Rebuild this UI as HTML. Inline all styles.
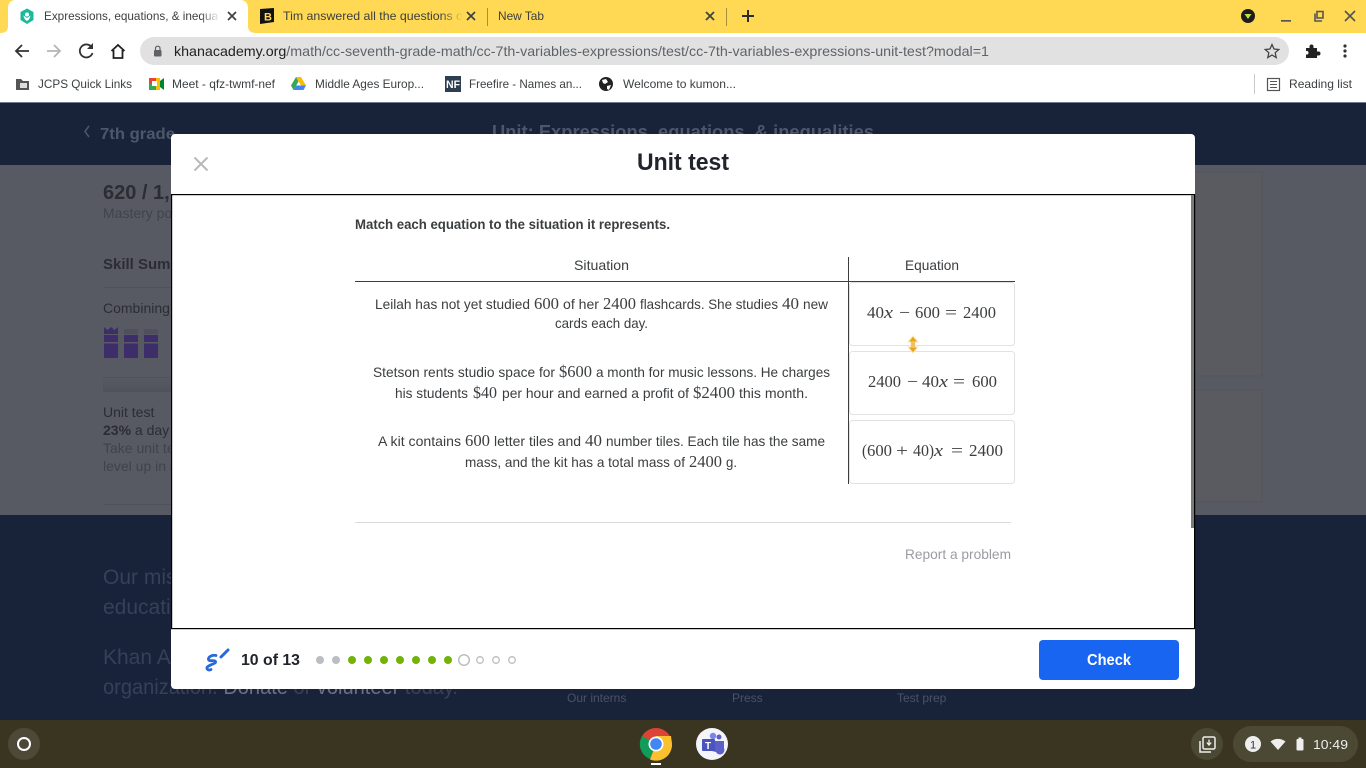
<!DOCTYPE html>
<html><head><meta charset="utf-8"><title>Unit test</title>
<style>
html,body{margin:0;padding:0;width:1366px;height:768px;overflow:hidden;background:#fff}
svg{display:block}
text{font-family:"Liberation Sans",sans-serif;white-space:pre}
.b{font-size:12px;fill:#3c4043}
.s{font-size:14px;fill:#3b3e40}
.m{font-family:"Liberation Serif",serif;font-size:17px;fill:#3b3e40}
.e{font-family:"Liberation Serif",serif;font-size:17px;fill:#3b3e40}
.t{font-size:12px;fill:#3c4043}
</style></head><body>
<svg width="1366" height="768" viewBox="0 0 1366 768" xmlns="http://www.w3.org/2000/svg">
<defs>
<linearGradient id="f1" x1="0" x2="1"><stop offset="0" stop-color="#fff" stop-opacity="0"/><stop offset="1" stop-color="#fff"/></linearGradient>
<linearGradient id="f2" x1="0" x2="1"><stop offset="0" stop-color="#ffd954" stop-opacity="0"/><stop offset="1" stop-color="#ffd954"/></linearGradient>
<linearGradient id="g1" x1="0" x2="0" y1="0" y2="1"><stop offset="0" stop-color="#585a63"/><stop offset="1" stop-color="#50525a"/></linearGradient>
</defs>

<!-- tab strip -->
<rect width="1366" height="33" fill="#ffd954"/>
<path d="M0 33 C6 33 8 30 8 26 V8 C8 3 11 0 16 0 H240 C245 0 248 3 248 8 V26 C248 30 250 33 256 33 Z" fill="#fff"/>
<path d="M27 8.500 L33.500 12 V20 L27 24 L20.500 20 V12 Z" fill="#1cb89a"/>
<circle cx="27" cy="14.500" r="2" fill="#fff"/><path d="M23.500 15.500 C24 19 26 20.500 27 21 C28 20.500 30 19 30.500 15.500 L27 18 Z" fill="#fff"/>
<text x="44" y="20" class="t" textLength="174" lengthAdjust="spacingAndGlyphs">Expressions, equations, &amp; inequa</text>
<rect x="200" y="6" width="20" height="20" fill="url(#f1)"/>
<path d="M228 12 L236 20 M236 12 L228 20" stroke="#3c4043" stroke-width="1.700"/>
<path d="M260 9 L274 8 V22 L260 24 Z" fill="#111"/><text x="264" y="20.500" font-size="11" font-weight="700" fill="#ffd954">B</text>
<text x="283" y="20" class="t" textLength="180" lengthAdjust="spacingAndGlyphs">Tim answered all the questions o</text>
<rect x="441" y="6" width="22" height="20" fill="url(#f2)"/>
<path d="M467 12 L475 20 M475 12 L467 20" stroke="#3c4043" stroke-width="1.700"/>
<rect x="487" y="8" width="1" height="18" fill="#a89038"/>
<text x="498" y="20" class="t" textLength="46" lengthAdjust="spacingAndGlyphs">New Tab</text>
<path d="M706 12 L714 20 M714 12 L706 20" stroke="#3c4043" stroke-width="1.700"/>
<rect x="726" y="8" width="1" height="18" fill="#a89038"/>
<path d="M742 16 H754 M748 10 V22" stroke="#2b2b2b" stroke-width="2"/>
<circle cx="1248" cy="16" r="7" fill="#1c1c1c"/><path d="M1244.500 14 H1251.500 L1248 19 Z" fill="#c9d84a"/>
<rect x="1281" y="20" width="10" height="1.700" fill="#555"/>
<path d="M1315 13.500 V21 H1322 M1317 11.500 H1323 V18 H1317 Z" fill="none" stroke="#555" stroke-width="1.600"/>
<path d="M1345 11 L1355 21 M1355 11 L1345 21" stroke="#555" stroke-width="1.700"/>

<!-- toolbar -->
<rect y="33" width="1366" height="69" fill="#fff"/>
<path d="M29 51 H16 M22 45 L16 51 L22 57" fill="none" stroke="#333" stroke-width="1.800"/>
<path d="M47 51 H60 M54 45 L60 51 L54 57" fill="none" stroke="#b5b5b5" stroke-width="1.800"/>
<path d="M91.500 47 A6.500 6.500 0 1 0 92.500 53" fill="none" stroke="#333" stroke-width="1.800"/><path d="M93 43 V49 H87 Z" fill="#333"/>
<path d="M111.500 51 L118 45 L124.500 51 M113.500 50 V58 H122.500 V50" fill="none" stroke="#222" stroke-width="1.800"/>
<rect x="140" y="37" width="1149" height="28" rx="14" fill="#e1e1e1"/>
<rect x="154" y="50" width="7.500" height="6.500" rx="1" fill="#5f6368"/><path d="M155.500 50 V48 A2.300 2.300 0 0 1 160 48 V50" fill="none" stroke="#5f6368" stroke-width="1.200"/>
<text x="174" y="56" font-size="14" textLength="815" lengthAdjust="spacingAndGlyphs" fill="#5f6368"><tspan fill="#202124">khanacademy.org</tspan>/math/cc-seventh-grade-math/cc-7th-variables-expressions/test/cc-7th-variables-expressions-unit-test?modal=1</text>
<path d="M1272 44.500 L1274 49 L1278.800 49.500 L1275.200 52.700 L1276.200 57.500 L1272 55 L1267.800 57.500 L1268.800 52.700 L1265.200 49.500 L1270 49 Z" fill="none" stroke="#444" stroke-width="1.300"/>
<path d="M1306 48 H1309.500 V46.500 A2 2 0 0 1 1313.500 46.500 V48 H1317 V51.500 H1318.500 A2 2 0 0 1 1318.500 55.500 H1317 V58 H1306 V54.500 H1307.500 A2 2 0 0 0 1307.500 51 H1306 Z" fill="#222"/>
<circle cx="1345" cy="46" r="1.600" fill="#333"/><circle cx="1345" cy="51" r="1.600" fill="#333"/><circle cx="1345" cy="56" r="1.600" fill="#333"/>

<!-- bookmarks -->
<path d="M16 79 H21 L23 81 H29 V90 H16 Z" fill="#555"/><rect x="20" y="83" width="7" height="5" fill="#ddd"/>
<text x="38" y="88" class="b" textLength="94" lengthAdjust="spacingAndGlyphs">JCPS Quick Links</text>
<rect x="149" y="78" width="7" height="6" fill="#ea4335"/><rect x="149" y="84" width="7" height="6" fill="#34a853"/><rect x="156" y="78" width="4" height="12" fill="#fbbc04"/><path d="M160 81 L164 78 V90 L160 87 Z" fill="#00832d"/><rect x="152" y="81" width="5" height="5" fill="#fff"/>
<text x="172" y="88" class="b" textLength="103" lengthAdjust="spacingAndGlyphs">Meet - qfz-twmf-nef</text>
<path d="M296 77 H301 L306 85.500 H301 Z" fill="#fbbc04"/><path d="M296 77 L291 85.500 L293.500 90 L298.500 81.500 Z" fill="#34a853"/><path d="M293.500 90 H303.500 L306 85.500 H296 Z" fill="#4285f4"/>
<text x="315" y="88" class="b" textLength="109" lengthAdjust="spacingAndGlyphs">Middle Ages Europ...</text>
<rect x="445" y="76" width="16" height="16" fill="#2c3e50"/><text x="446" y="88" font-size="11" font-weight="700" fill="#fff" textLength="14" lengthAdjust="spacingAndGlyphs">NF</text>
<text x="469" y="88" class="b" textLength="113" lengthAdjust="spacingAndGlyphs">Freefire - Names an...</text>
<circle cx="606" cy="84" r="7" fill="#222"/><path d="M602 80 L606 79 L608 82 L605 84 L603 83 Z M607 86 L611 85 L609 90 L607 89 Z" fill="#fff"/>
<text x="623" y="88" class="b" textLength="113" lengthAdjust="spacingAndGlyphs">Welcome to kumon...</text>
<rect x="1254" y="74" width="1" height="20" fill="#c8c8c8"/>
<rect x="1267.500" y="78.500" width="12" height="12" fill="none" stroke="#555" stroke-width="1.200"/><path d="M1270 81.500 H1277 M1270 84.500 H1277 M1270 87.500 H1277" stroke="#555" stroke-width="1"/>
<text x="1289" y="88" class="b" textLength="63" lengthAdjust="spacingAndGlyphs">Reading list</text>

<!-- dimmed page -->
<rect y="102" width="1366" height="618" fill="#182238"/>
<rect y="102" width="1366" height="1" fill="#6f7a8f"/>
<rect y="165" width="1366" height="350" fill="#585a63"/>
<rect x="1190" y="172" width="72" height="204" fill="#5a5b61" stroke="#54565d"/>
<rect x="1190" y="390" width="72" height="112" fill="#5a5b61" stroke="#54565d"/>
<path d="M89 126 L85 131.500 L89 137" fill="none" stroke="#4e576a" stroke-width="1.500"/>
<text x="100" y="139" font-size="16" font-weight="700" fill="#4e576a" textLength="75" lengthAdjust="spacingAndGlyphs">7th grade</text>
<text x="492" y="138" font-size="18" font-weight="700" fill="#4e576a" textLength="382" lengthAdjust="spacingAndGlyphs">Unit: Expressions, equations, &amp; inequalities</text>
<text x="103" y="199" font-size="20" font-weight="700" fill="#2b2d33">620 / 1,</text>
<text x="103" y="218" font-size="14" fill="#41434b">Mastery po</text>
<text x="103" y="269" font-size="15" font-weight="700" fill="#2b2d33">Skill Summ</text>
<rect x="103" y="287" width="68" height="1" fill="#50525a"/>
<text x="103" y="313" font-size="14" fill="#2b2d33">Combining</text>
<path d="M104 334 V327 L107.500 330 L111 327 L114.500 330 L118 327 V334 Z" fill="#3d2e6a"/>
<path d="M124 334 V329 H138 V334 Z M144 334 V329 H158 V334 Z" fill="#504f60"/>
<rect x="104" y="335" width="14" height="7" fill="#3d2e6a"/><rect x="104" y="343.500" width="14" height="14.500" fill="#3d2e6a"/>
<rect x="124" y="335" width="14" height="7" fill="#3d2e6a"/><rect x="124" y="343.500" width="14" height="14.500" fill="#3d2e6a"/>
<rect x="144" y="335" width="14" height="7" fill="#3d2e6a"/><rect x="144" y="343.500" width="14" height="14.500" fill="#3d2e6a"/>
<rect x="103" y="377" width="68" height="1" fill="#50525a"/>
<rect x="103" y="378" width="68" height="14" fill="url(#g1)"/>
<text x="103" y="417" font-size="14" fill="#2b2d33">Unit test</text>
<text x="103" y="435" font-size="14" fill="#2b2d33"><tspan font-weight="700">23%</tspan> a day a</text>
<text x="103" y="453" font-size="14" fill="#41434b">Take unit te</text>
<text x="103" y="471" font-size="14" fill="#41434b">level up in a</text>
<rect x="103" y="504" width="68" height="1" fill="#50525a"/>
<text x="103" y="584" font-size="21" fill="#36405a">Our mis</text>
<text x="103" y="614" font-size="21" fill="#36405a">educatio</text>
<text x="103" y="664" font-size="21" fill="#36405a">Khan Ac</text>
<text x="103" y="694" font-size="21" fill="#36405a" textLength="355" lengthAdjust="spacingAndGlyphs">organization. <tspan fill="#6a7083">Donate</tspan> or <tspan fill="#6a7083">volunteer</tspan> today.</text>
<text x="567" y="702" font-size="12" fill="#4a5368">Our interns</text>
<text x="732" y="702" font-size="12" fill="#4a5368">Press</text>
<text x="897" y="702" font-size="12" fill="#4a5368">Test prep</text>

<!-- modal -->
<rect x="171" y="134" width="1024" height="555" rx="4" fill="#fff"/>
<path d="M194.500 157.500 L207.500 170.500 M207.500 157.500 L194.500 170.500" stroke="#b9b9b9" stroke-width="2"/>
<text x="637" y="170" font-size="24" font-weight="700" fill="#21242c" textLength="92" lengthAdjust="spacingAndGlyphs">Unit test</text>
<rect x="171" y="194" width="1024" height="1.200" fill="#000"/>
<rect x="171" y="194" width="1.200" height="435" fill="#000"/>
<rect x="171" y="628" width="1024" height="1.200" fill="#000"/>
<rect x="1191" y="195" width="3" height="333" fill="#7a7a7a"/>
<rect x="1194" y="195" width="1.200" height="434" fill="#000"/>

<text x="355" y="229" font-size="14" font-weight="700" fill="#3b3e40" textLength="315" lengthAdjust="spacingAndGlyphs">Match each equation to the situation it represents.</text>
<text x="574" y="270" class="s" textLength="55" lengthAdjust="spacingAndGlyphs">Situation</text>
<text x="905" y="270" class="s" textLength="54" lengthAdjust="spacingAndGlyphs">Equation</text>
<rect x="355" y="281" width="660" height="1" fill="#3b3e40"/>
<rect x="848" y="257" width="1" height="227" fill="#3b3e40"/>

<text x="375" y="309" class="s" textLength="155" lengthAdjust="spacingAndGlyphs">Leilah has not yet studied</text>
<text x="534" y="309" class="m" textLength="25" lengthAdjust="spacingAndGlyphs">600</text>
<text x="563" y="309" class="s" textLength="36" lengthAdjust="spacingAndGlyphs">of her</text>
<text x="603" y="309" class="m" textLength="33" lengthAdjust="spacingAndGlyphs">2400</text>
<text x="640" y="309" class="s" textLength="138" lengthAdjust="spacingAndGlyphs">flashcards. She studies</text>
<text x="782" y="309" class="m" textLength="17" lengthAdjust="spacingAndGlyphs">40</text>
<text x="803" y="309" class="s" textLength="25" lengthAdjust="spacingAndGlyphs">new</text>
<text x="555" y="328" class="s" textLength="93" lengthAdjust="spacingAndGlyphs">cards each day.</text>

<text x="373" y="377" class="s" textLength="182" lengthAdjust="spacingAndGlyphs">Stetson rents studio space for</text>
<text x="559" y="377" class="m" textLength="33" lengthAdjust="spacingAndGlyphs">$600</text>
<text x="596" y="377" class="s" textLength="234" lengthAdjust="spacingAndGlyphs">a month for music lessons. He charges</text>
<text x="395" y="398" class="s" textLength="73" lengthAdjust="spacingAndGlyphs">his students</text>
<text x="473" y="398" class="m" textLength="24" lengthAdjust="spacingAndGlyphs">$40</text>
<text x="502" y="398" class="s" textLength="187" lengthAdjust="spacingAndGlyphs">per hour and earned a profit of</text>
<text x="693" y="398" class="m" textLength="42" lengthAdjust="spacingAndGlyphs">$2400</text>
<text x="739" y="398" class="s" textLength="69" lengthAdjust="spacingAndGlyphs">this month.</text>

<text x="378" y="446" class="s" textLength="83" lengthAdjust="spacingAndGlyphs">A kit contains</text>
<text x="465" y="446" class="m" textLength="25" lengthAdjust="spacingAndGlyphs">600</text>
<text x="494" y="446" class="s" textLength="87" lengthAdjust="spacingAndGlyphs">letter tiles and</text>
<text x="585" y="446" class="m" textLength="17" lengthAdjust="spacingAndGlyphs">40</text>
<text x="606" y="446" class="s" textLength="219" lengthAdjust="spacingAndGlyphs">number tiles. Each tile has the same</text>
<text x="465" y="467" class="s" textLength="220" lengthAdjust="spacingAndGlyphs">mass, and the kit has a total mass of</text>
<text x="689" y="467" class="m" textLength="33" lengthAdjust="spacingAndGlyphs">2400</text>
<text x="726" y="467" class="s" textLength="11" lengthAdjust="spacingAndGlyphs">g.</text>

<rect x="849.500" y="282.500" width="165" height="63" rx="3" fill="#fff" stroke="#e2e2e2"/>
<rect x="849.500" y="351.500" width="165" height="63" rx="3" fill="#fff" stroke="#e2e2e2"/>
<rect x="849.500" y="420.500" width="165" height="63" rx="3" fill="#fff" stroke="#e2e2e2"/>

<text x="867" y="318" class="e" textLength="17" lengthAdjust="spacingAndGlyphs">40</text><text x="884" y="318" class="e" font-style="italic" textLength="9" lengthAdjust="spacingAndGlyphs">x</text>
<text x="899" y="318" class="e" textLength="11" lengthAdjust="spacingAndGlyphs">−</text>
<text x="915" y="318" class="e" textLength="25" lengthAdjust="spacingAndGlyphs">600</text>
<text x="945" y="318" class="e" textLength="12" lengthAdjust="spacingAndGlyphs">=</text>
<text x="963" y="318" class="e" textLength="33" lengthAdjust="spacingAndGlyphs">2400</text>

<text x="868" y="387" class="e" textLength="33" lengthAdjust="spacingAndGlyphs">2400</text>
<text x="907" y="387" class="e" textLength="11" lengthAdjust="spacingAndGlyphs">−</text>
<text x="922" y="387" class="e" textLength="17" lengthAdjust="spacingAndGlyphs">40</text><text x="939" y="387" class="e" font-style="italic" textLength="9" lengthAdjust="spacingAndGlyphs">x</text>
<text x="953" y="387" class="e" textLength="12" lengthAdjust="spacingAndGlyphs">=</text>
<text x="972" y="387" class="e" textLength="25" lengthAdjust="spacingAndGlyphs">600</text>

<text x="862" y="456" class="e" textLength="5" lengthAdjust="spacingAndGlyphs">(</text>
<text x="867" y="456" class="e" textLength="25" lengthAdjust="spacingAndGlyphs">600</text>
<text x="896" y="456" class="e" textLength="12" lengthAdjust="spacingAndGlyphs">+</text>
<text x="913" y="456" class="e" textLength="16" lengthAdjust="spacingAndGlyphs">40</text>
<text x="929" y="456" class="e" textLength="5" lengthAdjust="spacingAndGlyphs">)</text>
<text x="934" y="456" class="e" font-style="italic" textLength="9" lengthAdjust="spacingAndGlyphs">x</text>
<text x="951" y="456" class="e" textLength="12" lengthAdjust="spacingAndGlyphs">=</text>
<text x="969" y="456" class="e" textLength="34" lengthAdjust="spacingAndGlyphs">2400</text>

<path d="M913 336 L918 342 H915 V347 H918 L913 353 L908 347 H911 V342 H908 Z" fill="#e8a317" stroke="#fbe6b5" stroke-width="1"/>
<path d="M913 341 V348" stroke="#f7dfa8" stroke-width="1"/>

<rect x="355" y="522" width="656" height="1" fill="#dcdcdc"/>
<text x="905" y="559" font-size="14" fill="#9a9ca1" textLength="106" lengthAdjust="spacingAndGlyphs">Report a problem</text>

<!-- footer -->
<path d="M216 655.500 C212 654.500 208 657 208.500 659.500 C209 662 214.500 659.500 215.500 661.500 C216.500 664 208.500 664.500 207 667.500 C206.500 670 209.500 670.500 211 669.500" fill="none" stroke="#2a6ad8" stroke-width="2.800" stroke-linecap="round" stroke-linejoin="round"/>
<path d="M221 657 L228 650" stroke="#2a6ad8" stroke-width="3" stroke-linecap="round"/>
<text x="241" y="665" font-size="15.500" font-weight="700" fill="#21242c" textLength="59" lengthAdjust="spacingAndGlyphs">10 of 13</text>
<circle cx="320" cy="660" r="4" fill="#babec2"/><circle cx="336" cy="660" r="4" fill="#babec2"/>
<g fill="#71b307"><circle cx="352" cy="660" r="4"/><circle cx="368" cy="660" r="4"/><circle cx="384" cy="660" r="4"/><circle cx="400" cy="660" r="4"/><circle cx="416" cy="660" r="4"/><circle cx="432" cy="660" r="4"/><circle cx="448" cy="660" r="4"/></g>
<circle cx="464" cy="660" r="5.300" fill="#fff" stroke="#babec2" stroke-width="1.500"/>
<g fill="#fff" stroke="#babec2" stroke-width="1.300"><circle cx="480" cy="660" r="3.300"/><circle cx="496" cy="660" r="3.300"/><circle cx="512" cy="660" r="3.300"/></g>
<rect x="1039" y="640" width="140" height="40" rx="4" fill="#1865f2"/>
<text x="1087" y="665" font-size="16" font-weight="700" fill="#fff" textLength="44" lengthAdjust="spacingAndGlyphs">Check</text>

<!-- shelf -->
<rect y="720" width="1366" height="48" fill="#3a3520"/>
<circle cx="24" cy="744" r="16" fill="#4d4936"/><circle cx="24" cy="744" r="6" fill="none" stroke="#fff" stroke-width="2"/>
<circle cx="656" cy="744" r="16" fill="#db4437"/>
<path d="M656 744 L642 736 A16 16 0 0 0 650 759 Z" fill="#0f9d58"/>
<path d="M656 744 L650 759.500 A16 16 0 0 0 672 744 L671 736 L656 736 Z" fill="#fbc02d"/>
<circle cx="656" cy="744" r="7.500" fill="#fff"/><circle cx="656" cy="744" r="5.800" fill="#4285f4"/>
<rect x="651" y="763" width="10" height="2" fill="#fff"/>
<circle cx="712" cy="744" r="16" fill="#f4f4fb"/>
<circle cx="719" cy="737" r="2.500" fill="#5b5fc7"/><circle cx="713" cy="736" r="3.200" fill="#7b83eb"/>
<path d="M712 741 H724 V748 A4 4 0 0 1 716 752 L712 751 Z" fill="#5b5fc7"/>
<rect x="702" y="739" width="13" height="12" rx="1" fill="#4b53bc"/>
<text x="705" y="749" font-size="10" font-weight="700" fill="#fff">T</text>
<circle cx="1207" cy="744" r="16" fill="#4b4833"/>
<rect x="1203" y="737" width="12" height="12" rx="1.500" fill="none" stroke="#eee" stroke-width="1.500"/>
<path d="M1200 741 V752 H1211" fill="none" stroke="#eee" stroke-width="1.500"/>
<path d="M1209 739.500 V744 M1206.800 742.500 L1209 745 L1211.200 742.500" fill="none" stroke="#eee" stroke-width="1.300"/>
<rect x="1233" y="726" width="125" height="36" rx="18" fill="#4b4833"/>
<circle cx="1253" cy="744" r="8" fill="#eee"/><text x="1250" y="748.500" font-size="11" fill="#333">1</text>
<path d="M1270.500 741.500 C1275 738 1281 738 1285.500 741.500 L1278 750 Z" fill="#eee"/>
<rect x="1296.500" y="739" width="7" height="11.500" rx="1" fill="#eee"/><rect x="1298.500" y="737.500" width="3" height="2" fill="#eee"/>
<text x="1313" y="749" font-size="13" fill="#eee" textLength="35" lengthAdjust="spacingAndGlyphs">10:49</text>
</svg>
</body></html>
